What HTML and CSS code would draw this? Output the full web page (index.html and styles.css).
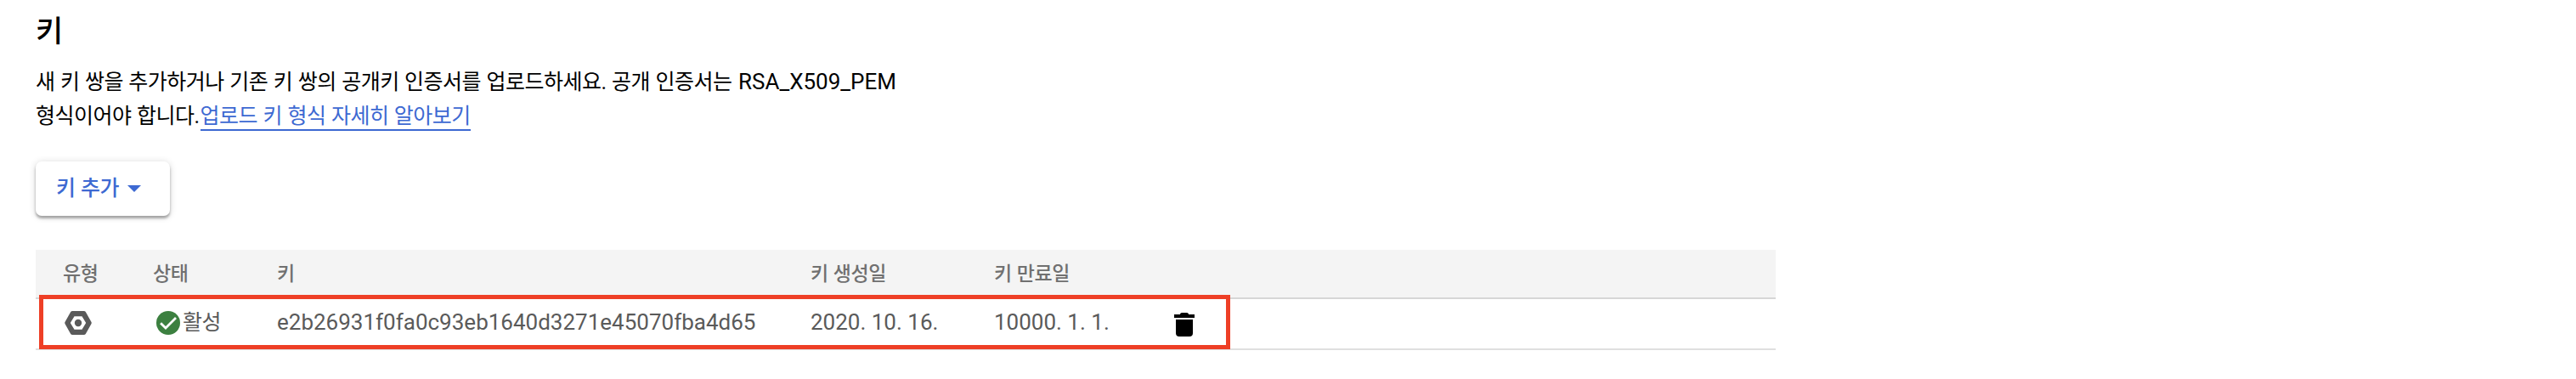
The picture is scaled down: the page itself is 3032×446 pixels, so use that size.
FILE: index.html
```html
<!DOCTYPE html>
<html lang="ko">
<head>
<meta charset="utf-8">
<title>키</title>
<link rel="stylesheet" href="styles.css">
</head>
<body>
<main class="page">
  <h1 class="title">키</h1>
  <p class="intro">새 키 쌍을 추가하거나 기존 키 쌍의 공개키 인증서를 업로드하세요. 공개 인증서는 <span class="latin">RSA_X509_PEM</span><br>형식이어야 합니다.<a class="link">업로드 키 형식 자세히 알아보기</a></p>
  <button class="add" type="button">키 추가<svg class="caret" width="16" height="8" viewBox="0 0 16 8"><path d="M0 0h16L8 8z" fill="currentColor"/></svg></button>
  <section class="table">
    <div class="row head">
      <span>유형</span><span>상태</span><span>키</span><span>키 생성일</span><span>키 만료일</span><span></span>
    </div>
    <div class="row body">
      <span class="icon type"><svg width="32" height="28" viewBox="0 0 32 28"><path fill="#5a5a5a" fill-rule="evenodd" d="M9.2 0h13.6q1.3 0 2 1.1l6.6 11.7q.7 1.2 0 2.4l-6.6 11.7q-.7 1.1-2 1.1H9.2q-1.3 0-2-1.1L.6 15.2q-.7-1.2 0-2.4L7.200 1.100Q7.900 0 9.200 0zM11.500 6.200 6.800 14l4.700 7.800h9L25.200 14l-4.700-7.800z"/><circle cx="16" cy="14" r="4.200" fill="#5a5a5a"/></svg></span>
      <span class="status"><svg width="28" height="28" viewBox="0 0 28 28"><circle cx="14" cy="14" r="14" fill="#3c8040"/><path d="M5.100 14.200l5.900 5.900L23 7.900" fill="none" stroke="#fff" stroke-width="2.800"/></svg>활성</span>
      <span class="latin">e2b26931f0fa0c93eb1640d3271e45070fba4d65</span>
      <span class="latin">2020. 10. 16.</span>
      <span class="latin">10000. 1. 1.</span>
      <span class="icon trash"><svg width="24" height="28" viewBox="0 0 24 28"><path d="M0 2h7V1.500Q7.500 0 9 0h6q1.500 0 2 1.500V2h7v4H0zM2 8h20v16q0 4-4 4H6q-4 0-4-4z"/></svg></span>
    </div>
    <div class="highlight"></div>
  </section>
</main>
</body>
</html>
```
FILE: styles.css
```css
* { box-sizing: border-box; }
body {
  margin: 0;
  background: #fff;
  color: #000;
  font: 25px/40px Roboto, "Noto Sans CJK KR", sans-serif;
}
.page {
  display: flex;
  flex-direction: column;
  align-items: flex-start;
  width: 2090px;
  padding: 14px 0 0 42px;
  letter-spacing: -.5px;
  word-spacing: .75px;
}
.latin { font-size: 26px; letter-spacing: 0; word-spacing: 0; }
.title { margin: 0; font-size: 35px; font-weight: 500; line-height: 48px; }
.intro { margin: 15px 0 0; white-space: nowrap; }
.intro .latin { margin-left: 1px; line-height: 1; }
.link {
  display: inline-block;
  height: 37px;
  margin-left: 1px;
  color: #3d69d2;
  border-bottom: 2px solid #3d69d2;
}
.add {
  display: flex;
  align-items: center;
  gap: 10px;
  width: 158px;
  height: 64px;
  margin: 33px 0 0;
  padding: 0 0 0 24px;
  border: 0;
  border-radius: 7px;
  background: #fff;
  color: #3d69d2;
  font: inherit;
  font-weight: 500;
  letter-spacing: inherit;
  word-spacing: inherit;
  box-shadow: 0 3px 3px rgba(0, 0, 0, .3), 0 1px 8px rgba(0, 0, 0, .16);
}
.table { position: relative; width: 2048px; margin-top: 40px; }
.row {
  display: grid;
  grid-template-columns: 106px 146px 628px 216px 212px 1fr;
  align-items: center;
  padding-left: 32px;
}
.head {
  height: 58px;
  padding-top: 2px;
  background: #f4f4f4;
  border-bottom: 2px solid #d6d6d6;
  color: #707070;
  font-size: 23px;
  font-weight: 500;
  letter-spacing: -.4px;
  word-spacing: .6px;
}
.body {
  height: 60px;
  padding-bottom: 2px;
  border-bottom: 2px solid #dfdfdf;
  color: #5a5a5a;
}
.body .latin { padding-bottom: 2px; }
.icon, .status { display: flex; align-items: center; }
.type { padding-left: 2px; }
.status { gap: 3px; padding-left: 4px; }
.trash { color: #000; padding-top: 4px; }
.highlight {
  position: absolute;
  left: 4px;
  top: 53px;
  width: 1402px;
  height: 64px;
  border: 5px solid #ee3f26;
}
```
